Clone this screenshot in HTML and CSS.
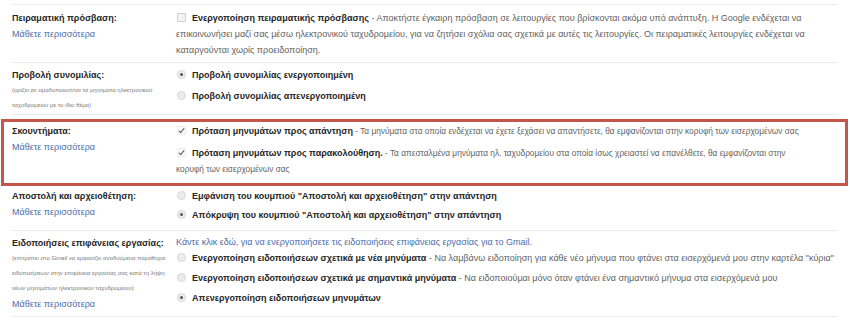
FILE: index.html
```html
<!DOCTYPE html>
<html lang="el">
<head>
    <meta charset="UTF-8">
    <meta name="viewport" content="width=device-width, initial-scale=1.0">
    <title>Ρυθμίσεις</title>
    <link rel="stylesheet" href="styles.css">
</head>
<body>
    <div class="settings">
        <div class="row first">
            <div class="label">
                <div class="title">Πειραματική πρόσβαση:</div>
                <a class="link" href="#">Μάθετε περισσότερα</a>
            </div>
            <div class="content">
                <p class="opt"><span class="cb"></span><b>Ενεργοποίηση πειραματικής πρόσβασης</b> - Αποκτήστε έγκαιρη πρόσβαση σε λειτουργίες που βρίσκονται ακόμα υπό ανάπτυξη. Η Google ενδέχεται να επικοινωνήσει μαζί σας μέσω ηλεκτρονικού ταχυδρομείου, για να ζητήσει σχόλια σας σχετικά με αυτές τις λειτουργίες. Οι πειραματικές λειτουργίες ενδέχεται να καταργούνται χωρίς προειδοποίηση.</p>
            </div>
        </div>

        <div class="row conv">
            <div class="label">
                <div class="title">Προβολή συνομιλίας:</div>
                <div class="note">(ορίζει αν ομαδοποιούνται τα μηνύματα ηλεκτρονικού ταχυδρομείου με το ίδιο θέμα)</div>
            </div>
            <div class="content">
                <p class="opt"><span class="rd on"></span><b>Προβολή συνομιλίας ενεργοποιημένη</b></p>
                <p class="opt"><span class="rd"></span><b>Προβολή συνομιλίας απενεργοποιημένη</b></p>
            </div>
        </div>

        <div class="row highlight">
            <div class="label">
                <div class="title">Σκουντήματα:</div>
                <a class="link" href="#">Μάθετε περισσότερα</a>
            </div>
            <div class="content">
                <p class="opt"><span class="cb on"></span><b>Πρόταση μηνυμάτων προς απάντηση</b><span class="desc"> - Τα μηνύματα στα οποία ενδέχεται να έχετε ξεχάσει να απαντήσετε, θα εμφανίζονται στην κορυφή των εισερχομένων σας</span></p>
                <p class="opt"><span class="cb on"></span><b>Πρόταση μηνυμάτων προς παρακολούθηση.</b><span class="desc"> - Τα απεσταλμένα μηνύματα ηλ. ταχυδρομείου στα οποία ίσως χρειαστεί να επανέλθετε, θα εμφανίζονται στην κορυφή των εισερχομένων σας</span></p>
            </div>
        </div>

        <div class="row archive">
            <div class="label">
                <div class="title">Αποστολή και αρχειοθέτηση:</div>
                <a class="link" href="#">Μάθετε περισσότερα</a>
            </div>
            <div class="content">
                <p class="opt"><span class="rd"></span><b>Εμφάνιση του κουμπιού "Αποστολή και αρχειοθέτηση" στην απάντηση</b></p>
                <p class="opt"><span class="rd on"></span><b>Απόκρυψη του κουμπιού "Αποστολή και αρχειοθέτηση" στην απάντηση</b></p>
            </div>
        </div>

        <div class="row notify">
            <div class="label">
                <div class="title">Ειδοποιήσεις επιφάνειας εργασίας:</div>
                <div class="note">(επιτρέπει στο Gmail να εμφανίζει αναδυόμενα παράθυρα ειδοποιήσεων στην επιφάνεια εργασίας σας κατά τη λήψη νέων μηνυμάτων ηλεκτρονικού ταχυδρομείου)</div>
                <a class="link" href="#">Μάθετε περισσότερα</a>
            </div>
            <div class="content">
                <a class="link enable" href="#">Κάντε κλικ εδώ, για να ενεργοποιήσετε τις ειδοποιήσεις επιφάνειας εργασίας για το Gmail.</a>
                <p class="opt"><span class="rd"></span><b>Ενεργοποίηση ειδοποιήσεων σχετικά με νέα μηνύματα</b> - Να λαμβάνω ειδοποίηση για κάθε νέο μήνυμα που φτάνει στα εισερχόμενά μου στην καρτέλα "κύρια"</p>
                <p class="opt"><span class="rd"></span><b>Ενεργοποίηση ειδοποιήσεων σχετικά με σημαντικά μηνύματα</b> - Να ειδοποιούμαι μόνο όταν φτάνει ένα σημαντικό μήνυμα στα εισερχόμενά μου</p>
                <p class="opt"><span class="rd on"></span><b>Απενεργοποίηση ειδοποιήσεων μηνυμάτων</b></p>
            </div>
        </div>
    </div>
</body>
</html>
```

FILE: styles.css
```css
body {
    margin: 0;
    background: #fff;
    font-family: "Liberation Sans", Arial, sans-serif;
    font-size: 9px;
    color: #5f5f5f;
}
.settings {
    padding: 4px 12px 0 12px;
}
.row {
    display: flex;
    border-bottom: 1px solid #ececec;
}
.row.first {
    border-top: 1px solid #ececec;
    padding: 5px 0 4px;
}
.label {
    width: 164px;
    flex-shrink: 0;
    line-height: 16px;
}
.title {
    font-weight: bold;
    color: #262626;
}
.note {
    font-size: 6px;
    line-height: 15px;
    color: #7a7a7a;
    padding-right: 6px;
}
.link {
    color: #4a6eaa;
    text-decoration: none;
}
.content {
    flex: 1;
    display: flex;
    flex-direction: column;
    gap: 5px;
    line-height: 16px;
}
.opt {
    margin: 0;
}
.opt b {
    color: #262626;
}

/* controls */
.cb, .rd {
    display: inline-block;
    width: 9px;
    height: 9px;
    margin: 0 6px 0 1px;
    vertical-align: -1px;
    box-sizing: border-box;
    position: relative;
}
.cb {
    border: 1px solid #cfcfcf;
    background: #f3f3f3;
    border-radius: 1px;
}
.cb.on {
    border-color: #ececec;
    background: #fbfbfb;
}
.cb.on::after {
    content: "";
    position: absolute;
    left: 2px;
    top: 0;
    width: 2px;
    height: 5px;
    border: solid #555;
    border-width: 0 1.5px 1.5px 0;
    transform: rotate(40deg);
}
.rd {
    border-radius: 50%;
    border: 1px solid #d6d6d6;
    background: #ececec;
}
.rd.on::after {
    content: "";
    position: absolute;
    left: 2px;
    top: 2px;
    width: 3px;
    height: 3px;
    border-radius: 50%;
    background: #555;
}

/* rows */
.conv {
    padding: 4px 0 1px;
}
.highlight {
    border: 3px solid #c5564a;
    margin: 4px -10px 2px -11px;
    padding: 1px 7px 6px 8px;
}
.highlight .content {
    gap: 6px;
    padding-right: 30px;
}
.highlight .desc {
    font-size: 8.3px;
}
.archive {
    padding: 0 0 7px;
}
.archive .content {
    gap: 3px;
}
.notify {
    padding: 4px 0 4px;
}
.notify .content {
    gap: 4px;
}
.notify .enable {
    line-height: 15px;
    margin-bottom: -4px;
}
```
